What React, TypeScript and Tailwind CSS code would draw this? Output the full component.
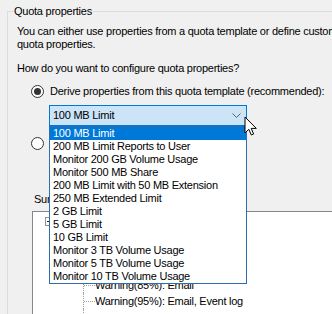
import React from 'react';

const templates = [
  '100 MB Limit',
  '200 MB Limit Reports to User',
  'Monitor 200 GB Volume Usage',
  'Monitor 500 MB Share',
  '200 MB Limit with 50 MB Extension',
  '250 MB Extended Limit',
  '2 GB Limit',
  '5 GB Limit',
  '10 GB Limit',
  'Monitor 3 TB Volume Usage',
  'Monitor 5 TB Volume Usage',
  'Monitor 10 TB Volume Usage',
];

const Radio: React.FC<{ checked?: boolean }> = ({ checked }) => (
  <span className="flex h-[13px] w-[13px] shrink-0 items-center justify-center rounded-full border border-[#333333] bg-white">
    {checked && <span className="h-[7px] w-[7px] rounded-full bg-[#333333]" />}
  </span>
);

const TreeRow: React.FC<{ depth: number; label: string; box?: boolean }> = ({ depth, label, box }) => (
  <div className="flex h-[16px] items-center whitespace-nowrap">
    <div style={{ width: 12 + depth * 19 }} className="shrink-0" />
    {box ? (
      <span className="mr-[4px] flex h-[9px] w-[9px] shrink-0 items-center justify-center border border-[#919191] bg-white">
        <span className="h-px w-[5px] bg-[#222]" />
      </span>
    ) : (
      <div className="flex self-stretch w-[12px] shrink-0 items-center border-l border-dotted border-[#a0a0a0]">
        {label && <div className="w-[11px] border-t border-dotted border-[#a0a0a0]" />}
      </div>
    )}
    <span>{label}</span>
  </div>
);

export default function App() {
  return (
    <div
      className="relative h-[314px] w-[332px] overflow-hidden bg-[#f0f0f0] text-[11px] leading-[13px] tracking-[-0.25px] text-black"
      style={{ fontFamily: '"Liberation Sans", Arial, sans-serif' }}
    >
      <div className="ml-[7px] mt-[11px] h-[320px] border-l border-t border-[#dcdcdc]">
        <div className="-mt-[7px] ml-[5px] flex">
          <span className="bg-[#f0f0f0] px-[1px]">Quota properties</span>
        </div>

        <div className="pl-[9px]">
          <div className="mt-[7px] whitespace-nowrap">
            <div>You can either use properties from a quota template or define custom</div>
            <div>quota properties.</div>
          </div>

          <div className="mt-[11px] whitespace-nowrap">How do you want to configure quota properties?</div>

          <div className="ml-[14px] mt-[10px] flex h-[13px] items-center gap-[6px] whitespace-nowrap">
            <Radio checked />
            <span>Derive properties from this quota template (recommended):</span>
          </div>

          <div className="relative ml-[32px] mt-[7px] w-[198px]">
            <div className="flex h-[21px] items-center justify-between border border-[#0078d7] bg-[#cce4f7] pl-[3px] pr-[5px]">
              <span>100 MB Limit</span>
              <svg width="9" height="5" viewBox="0 0 9 5" className="mt-[-1px]">
                <path d="M0.5 0.5 L4.5 4.5 L8.5 0.5" fill="none" stroke="#606060" strokeWidth="1" />
              </svg>
            </div>

            <div className="absolute left-0 top-full z-10 w-full border border-[#2f6eae] bg-white">
              {templates.map((t, i) => (
                <div
                  key={t}
                  className={`h-[13px] whitespace-nowrap pl-[3px] leading-[13px] ${
                    i === 0 ? 'bg-[#0078d7] text-white' : ''
                  }`}
                >
                  {t}
                </div>
              ))}
            </div>
          </div>

          <div className="ml-[14px] mt-[11px] flex h-[13px] items-center gap-[6px] whitespace-nowrap">
            <Radio />
            <span>Define custom quota properties</span>
          </div>

          <div className="ml-[17px] mt-[43px] whitespace-nowrap">Summary of quota properties:</div>

          <div className="ml-[15px] mt-[5px] h-[104px] w-[320px] overflow-hidden border border-[#828790] bg-white pt-px">
            <TreeRow depth={0} label="Quota: C:\Shares\Data" box />
            <TreeRow depth={1} label="Source template: 100 MB Limit" />
            <TreeRow depth={1} label="Limit: 100 MB (Hard)" />
            <TreeRow depth={1} label="Notification: 3" />
            <TreeRow depth={2} label="Warning(85%): Email" />
            <TreeRow depth={2} label="Warning(95%): Email, Event log" />
            <TreeRow depth={2} label="" />
          </div>
        </div>
      </div>

      <svg
        className="absolute left-[244px] top-[116px] z-20"
        width="14"
        height="21"
        viewBox="0 0 14 21"
      >
        <path
          d="M1 1 L1 17 L4.8 13.3 L7.3 19 L9.6 18 L7.2 12.4 L12.3 12.4 Z"
          fill="white"
          stroke="black"
          strokeWidth="1"
          strokeLinejoin="miter"
        />
      </svg>
    </div>
  );
}
